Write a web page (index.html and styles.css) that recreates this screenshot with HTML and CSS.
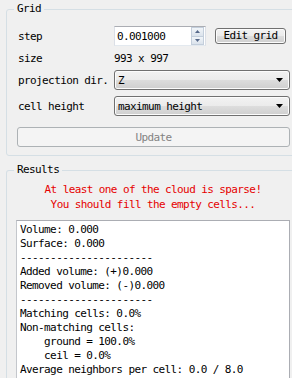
FILE: index.html
```html
<!DOCTYPE html>
<html>
<head>
<meta charset="utf-8">
<link rel="stylesheet" href="styles.css">
</head>
<body>
<fieldset class="group grid-group">
  <legend>Grid</legend>
  <div class="form">
    <span class="label">step</span>
    <div class="step-field">
      <div class="spin">
        <span class="spin-value">0.001000</span>
        <div class="spin-btns">
          <span class="spin-btn"><svg width="5" height="3" viewBox="0 0 5 3"><polygon points="0,3 5,3 2.5,0" fill="#56698a"/></svg></span>
          <span class="spin-btn"><svg width="5" height="3" viewBox="0 0 5 3"><polygon points="0,0 5,0 2.5,3" fill="#56698a"/></svg></span>
        </div>
      </div>
      <button class="btn edit">Edit grid</button>
    </div>
    <span class="label mid">size</span>
    <span class="value mid">993 x 997</span>
    <span class="label">projection dir.</span>
    <div class="combo"><span>Z</span><svg class="arrow" width="7" height="4" viewBox="0 0 7 4"><polygon points="0,0 7,0 3.5,4" fill="#000"/></svg></div>
    <span class="label">cell height</span>
    <div class="combo"><span>maximum height</span><svg class="arrow" width="7" height="4" viewBox="0 0 7 4"><polygon points="0,0 7,0 3.5,4" fill="#000"/></svg></div>
  </div>
  <button class="btn update" disabled>Update</button>
</fieldset>
<fieldset class="group results">
  <legend>Results</legend>
  <p class="warn">At least one of the cloud is sparse!<br>You should fill the empty cells...</p>
  <pre class="output">Volume: 0.000
Surface: 0.000
----------------------
Added volume: (+)0.000
Removed volume: (-)0.000
----------------------
Matching cells: 0.0%
Non-matching cells:
    ground = 100.0%
    ceil = 0.0%
Average neighbors per cell: 0.0 / 8.0</pre>
</fieldset>
</body>
</html>
```
FILE: styles.css
```css
html, body {
  margin: 0;
  padding: 0;
}
body {
  background: #f0f0f0;
  width: 292px;
  height: 378px;
  overflow: hidden;
  font-family: "DejaVu Sans Mono", "Liberation Mono", monospace;
  font-size: 11px;
  letter-spacing: -0.6px;
  color: #000;
}
.group {
  box-sizing: border-box;
  width: 300px;
  min-width: 0;
  margin: 0 0 0 6px;
  border: 1px solid #d5dfe5;
  border-radius: 3px;
}
.group legend {
  padding: 0 3px;
  line-height: 12px;
  height: 12px;
}
.grid-group {
  margin-top: 3px;
  padding: 0 15px 8px 10px;
}
.grid-group legend {
  margin-left: -3px;
}
.form {
  display: grid;
  grid-template-columns: 97px 176px;
  grid-template-rows: 20px 24px 20px 26px;
  align-items: end;
  margin-top: 11px;
}
.label {
  height: 20px;
  display: flex;
  align-items: center;
  padding-left: 1px;
}
.mid {
  align-self: center;
}
.value {
  height: 20px;
  display: flex;
  align-items: center;
}
.step-field {
  display: flex;
  align-items: center;
  height: 20px;
}
.spin {
  box-sizing: border-box;
  width: 92px;
  height: 20px;
  background: #fff;
  border: 1px solid #abadb3;
  border-left-color: #dbdfe6;
  border-right-color: #dbdfe6;
  border-bottom-color: #e3e9ef;
  display: flex;
  align-items: center;
  justify-content: space-between;
  padding-left: 2px;
}
.spin-btns {
  display: flex;
  flex-direction: column;
  width: 14px;
  height: 18px;
}
.spin-btn {
  flex: 1;
  display: flex;
  align-items: center;
  justify-content: center;
  background: linear-gradient(#f1f5f9, #dbe3ec);
  border: 1px solid #c3cedb;
  margin: 0 1px 0 0;
}
.spin-btn + .spin-btn {
  border-top: none;
}
.btn {
  font: inherit;
  letter-spacing: inherit;
  color: #000;
  box-sizing: border-box;
  padding: 0;
  border: 1px solid #707070;
  border-radius: 3px;
  background: linear-gradient(#f2f2f2 0%, #ebebeb 50%, #dddddd 50%, #cfcfcf 100%);
  box-shadow: inset 0 0 0 1px #fcfcfc;
}
.edit {
  width: 71px;
  height: 16px;
  margin-left: 9px;
  line-height: 14px;
}
.combo {
  box-sizing: border-box;
  width: 176px;
  height: 20px;
  border: 1px solid #707070;
  border-radius: 3px;
  background: linear-gradient(#f2f2f2 0%, #ebebeb 50%, #dddddd 50%, #cfcfcf 100%);
  box-shadow: inset 0 0 0 1px #fcfcfc;
  display: flex;
  align-items: center;
  justify-content: space-between;
  padding: 0 6px 0 3px;
}
.arrow {
  display: block;
}
.update {
  display: block;
  width: 273px;
  height: 20px;
  margin-top: 11px;
  border-color: #adb2b5;
  background: #f4f4f4;
  box-shadow: none;
  color: #838383;
}
.results {
  margin-top: 8px;
  padding: 0 15px 0 9px;
  border-bottom: none;
  border-radius: 3px 3px 0 0;
}
.results legend {
  margin-left: -2px;
}
.warn {
  margin: 6px 0 0 0;
  line-height: 15px;
  text-align: center;
  color: #e60000;
}
.output {
  box-sizing: border-box;
  width: 274px;
  height: 158px;
  margin: 8px 0 0 0;
  padding: 2px 3px;
  background: #fff;
  border: 1px solid #abadb3;
  border-left-color: #c4c7cc;
  border-bottom: none;
  font: inherit;
  letter-spacing: inherit;
  line-height: 14px;
  white-space: pre;
  overflow: hidden;
}
```
